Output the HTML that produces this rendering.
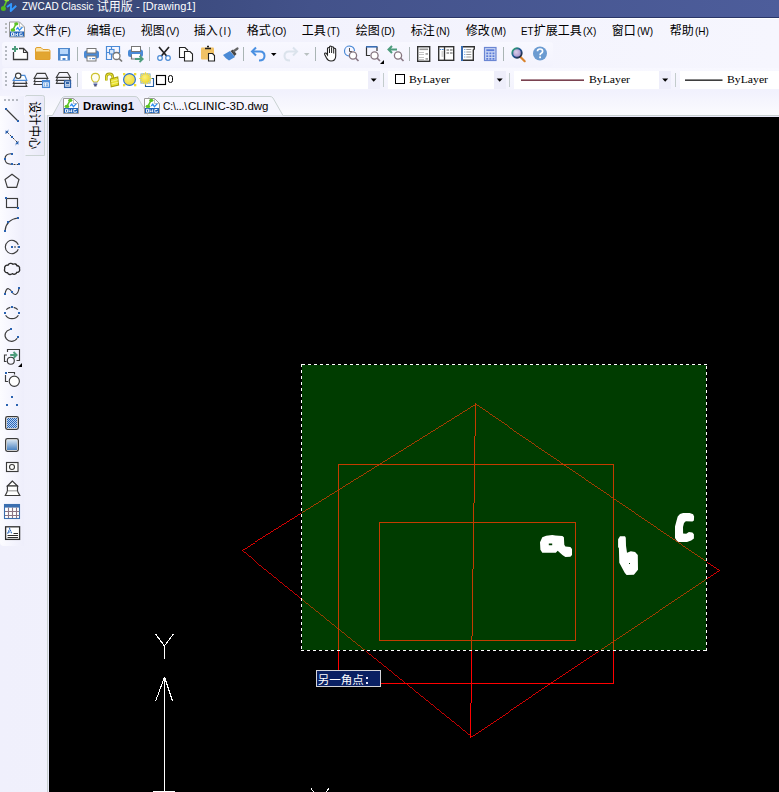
<!DOCTYPE html>
<html><head><meta charset="utf-8"><title>ZWCAD</title>
<style>
html,body{margin:0;padding:0}
body{width:779px;height:792px;overflow:hidden;position:relative;background:linear-gradient(90deg,#f0f0fc,#f6f6fe);font-family:"Liberation Sans",sans-serif}
.a{position:absolute}
.t{position:absolute;white-space:pre;transform-origin:0 0;display:block}
svg{position:absolute;left:0;top:0;overflow:visible}
svg text{font-family:"Liberation Sans","Noto Sans CJK SC",sans-serif}
</style></head><body>
<div class="a" style="left:0;top:0;width:779px;height:17px;background:linear-gradient(90deg,#374570 0,#3e4d82 28%,#43528a 40%,#4d5d9b 100%)"></div>
<div class="a" style="left:0;top:17px;width:779px;height:1px;background:#2a3668"></div>
<div class="a" style="left:0;top:18px;width:779px;height:1px;background:#fff"></div>
<span class="t" style="left:21.50px;top:0.04px;font:normal 11px/normal 'Liberation Sans',sans-serif;color:#fff;transform:scaleX(0.9072);">ZWCAD Classic</span>
<span class="t" style="left:135.50px;top:0.04px;font:normal 11px/normal 'Liberation Sans',sans-serif;color:#fff;transform:scaleX(1.0032);">- [Drawing1]</span>
<div class="a" style="left:0;top:90px;width:779px;height:25px;background:linear-gradient(#f1f1fd,#fbfbfe)"></div>
<div class="a" style="left:47px;top:115px;width:732px;height:1px;background:#c8d0d0"></div>
<div class="a" style="left:47px;top:116px;width:1px;height:676px;background:#c8d0d0"></div>
<div class="a" style="left:48px;top:116px;width:731px;height:676px;background:#e8e8f8"></div>
<div class="a" style="left:49px;top:117px;width:730px;height:675px;background:#000"></div>
<svg width="779" height="792" viewBox="0 0 779 792" shape-rendering="crispEdges">
<g shape-rendering="geometricPrecision"><text x="96.8" y="11.1" font-size="12" fill="#fff">试用版</text></g>
<g shape-rendering="geometricPrecision"><path d="M6.6 1L4.2 6.5" stroke="#5ec624" stroke-width="1.7" stroke-linecap="round" fill="none"/><ellipse cx="6.8" cy="0.2" rx="2.3" ry="1.4" fill="#8ee030"/><circle cx="3.4" cy="8.5" r="2.5" fill="#52b81c"/><path d="M7 7L11.2 3.9L10.7 11L16.2 5.8" fill="none" stroke="#3399ff" stroke-width="1.9" stroke-linejoin="round"/></g>
<g stroke="#f00" stroke-width="1" fill="none">
<path stroke-width="0.848" d="M475.5 404.5 L241.5 550.5"/>
<path stroke-width="0.778" d="M241.5 550.5 L471.5 736.5"/>
<path stroke-width="0.831" d="M471.5 736.5 L719.5 570.5"/>
<path stroke-width="0.827" d="M719.5 570.5 L475.5 404.5"/>
<path d="M475.51 403 L470.49 738"/>
<rect x="338.5" y="464.5" width="275" height="219"/>
<rect x="379.5" y="522.5" width="196" height="118"/>
</g>
<rect x="302" y="365" width="404" height="285" fill="rgba(0,255,0,0.235)"/>
<g stroke="#000" stroke-width="1" fill="none"><path d="M301 364.5H707M301.5 364V651M301 650.5H707M706.5 364V651"/></g>
<g stroke="#fff" stroke-width="1" fill="none" stroke-dasharray="3 3"><path d="M707 364.5H301"/><path d="M301.5 364V651"/><path d="M301 650.5H707"/><path d="M706.5 651V364"/></g>
<g fill="#fff" shape-rendering="auto">
<path fill-rule="evenodd" d="M542.3 537.3L546.2 535.8L552.3 535L555.4 535.4L562.4 535.9L563.9 537.3L564.3 544.7L565.4 546.6L570.4 547L572 548.9L572 555.1L570.4 556.8L565.4 557L562.4 555.1L557.7 550.8L555.8 552.7L542.3 552.7L540.4 549.7L540 542.3Z M548.8 543.6H552.2V545.3H548.8Z"/>
<path fill-rule="evenodd" d="M620 536.2L625 536.2L625.8 537.7L626 545.8L627 552.7L630.8 551.2L635.1 552L637.8 555L638 569.7L633.9 574.7L626.6 574.9L624.7 572.8L619.3 562.8L618.9 548.1L618.1 547.3L618.1 539.3Z M629 563H630V564H629Z"/>
<path d="M680 513.9L683.1 512.9L689.7 512.9L693.1 514.3L694.1 516.6L693.9 520.4L692.4 521.6L685.8 521.2L684 523.1L683 527L683.1 533.5L686.2 533.7L688.9 532L692.4 532.4L693.9 534.3L693.9 538.5L691.2 540.4L687 542L678.5 542L676.6 540.4L675 538.1L675 526.6L676.6 520.4L677.7 516.6Z"/>
</g>
<g stroke="#fff" stroke-width="1" fill="none">
<path d="M155.5 634 L164.5 646 L173.5 634 M164.5 646 V658.5"/>
<path d="M164.5 677 V792 M164.5 677 L155.5 701.5 M164.5 677 L172.5 701"/>
<path d="M153 791.5 H175"/>
<path d="M311 788.5 L314 792 M329 788.5 L326 792"/>
</g>
<rect x="316.500" y="670.500" width="64" height="16" fill="#0a2062" stroke="#d4d4d8"/>
<g shape-rendering="geometricPrecision"><text x="317.800" y="683.700" font-size="11.500" fill="#fff">另一角点</text></g>
<rect x="366" y="677" width="2" height="2" fill="#e8e8ff"/><rect x="366" y="682" width="2" height="2" fill="#e8e8ff"/>
</svg>
<span class="t" style="left:57.80px;top:25.05px;font:normal 11px/normal 'Liberation Sans',sans-serif;color:#000;transform:scaleX(0.9100);">(F)</span>
<span class="t" style="left:111.80px;top:25.05px;font:normal 11px/normal 'Liberation Sans',sans-serif;color:#000;transform:scaleX(0.9100);">(E)</span>
<span class="t" style="left:165.80px;top:25.05px;font:normal 11px/normal 'Liberation Sans',sans-serif;color:#000;transform:scaleX(0.9100);">(V)</span>
<span class="t" style="left:218.80px;top:25.05px;font:normal 11px/normal 'Liberation Sans',sans-serif;color:#000;transform:scaleX(0.9100);letter-spacing:1.4px;">(I)</span>
<span class="t" style="left:271.80px;top:25.05px;font:normal 11px/normal 'Liberation Sans',sans-serif;color:#000;transform:scaleX(0.9100);">(O)</span>
<span class="t" style="left:326.80px;top:25.05px;font:normal 11px/normal 'Liberation Sans',sans-serif;color:#000;transform:scaleX(0.9100);">(T)</span>
<span class="t" style="left:380.80px;top:25.05px;font:normal 11px/normal 'Liberation Sans',sans-serif;color:#000;transform:scaleX(0.9100);">(D)</span>
<span class="t" style="left:435.80px;top:25.05px;font:normal 11px/normal 'Liberation Sans',sans-serif;color:#000;transform:scaleX(0.9100);">(N)</span>
<span class="t" style="left:490.80px;top:25.05px;font:normal 11px/normal 'Liberation Sans',sans-serif;color:#000;transform:scaleX(0.9100);">(M)</span>
<span class="t" style="left:521.00px;top:25.05px;font:normal 11px/normal 'Liberation Sans',sans-serif;color:#000;transform:scaleX(0.8889);">ET</span>
<span class="t" style="left:582.80px;top:25.05px;font:normal 11px/normal 'Liberation Sans',sans-serif;color:#000;transform:scaleX(0.9100);">(X)</span>
<span class="t" style="left:636.80px;top:25.05px;font:normal 11px/normal 'Liberation Sans',sans-serif;color:#000;transform:scaleX(0.9100);">(W)</span>
<span class="t" style="left:694.80px;top:25.05px;font:normal 11px/normal 'Liberation Sans',sans-serif;color:#000;transform:scaleX(0.9100);">(H)</span>
<svg width="779" height="120" viewBox="0 0 779 120">
<rect x="5" y="23" width="2" height="2" fill="#b8bcbe"/>
<rect x="5" y="27" width="2" height="2" fill="#b8bcbe"/>
<rect x="5" y="31" width="2" height="2" fill="#b8bcbe"/>
<text x="32.800" y="35.200" font-size="12" fill="#000">文件</text>
<text x="86.800" y="35.200" font-size="12" fill="#000">编辑</text>
<text x="140.800" y="35.200" font-size="12" fill="#000">视图</text>
<text x="193.800" y="35.200" font-size="12" fill="#000">插入</text>
<text x="246.800" y="35.200" font-size="12" fill="#000">格式</text>
<text x="301.800" y="35.200" font-size="12" fill="#000">工具</text>
<text x="355.800" y="35.200" font-size="12" fill="#000">绘图</text>
<text x="410.800" y="35.200" font-size="12" fill="#000">标注</text>
<text x="465.800" y="35.200" font-size="12" fill="#000">修改</text>
<text x="533.800" y="35.200" font-size="12" fill="#000">扩展工具</text>
<text x="611.800" y="35.200" font-size="12" fill="#000">窗口</text>
<text x="669.800" y="35.200" font-size="12" fill="#000">帮助</text>
</svg>
<div class="a" style="left:2px;top:42px;width:551px;height:25px;background:linear-gradient(#f8f8ff,#f3f3fd);border-radius:3px"></div>
<div class="a" style="left:2px;top:68px;width:777px;height:22px;background:linear-gradient(#f8f8ff,#f3f3fd);border-radius:3px 0 0 3px"></div>
<svg width="779" height="120" viewBox="0 0 779 120">
<rect x="5" y="46" width="2" height="2" fill="#b4b8c0"/>
<rect x="5" y="50" width="2" height="2" fill="#b4b8c0"/>
<rect x="5" y="54" width="2" height="2" fill="#b4b8c0"/>
<rect x="5" y="58" width="2" height="2" fill="#b4b8c0"/>
<rect x="5" y="72" width="2" height="2" fill="#b4b8c0"/>
<rect x="5" y="76" width="2" height="2" fill="#b4b8c0"/>
<rect x="5" y="80" width="2" height="2" fill="#b4b8c0"/>
<rect x="5" y="84" width="2" height="2" fill="#b4b8c0"/>
<rect x="77" y="47" width="1" height="14" fill="#a9b4b4"/>
<rect x="149" y="47" width="1" height="14" fill="#a9b4b4"/>
<rect x="243" y="47" width="1" height="14" fill="#a9b4b4"/>
<rect x="315" y="47" width="1" height="14" fill="#a9b4b4"/>
<rect x="409" y="47" width="1" height="14" fill="#a9b4b4"/>
<rect x="503" y="47" width="1" height="14" fill="#a9b4b4"/>
<path d="M13.5 52V59.5H27.5V52.5L23.5 48.5H19" fill="#fff" stroke="#3a3a3a" stroke-width="1.3"/>
<path d="M23.5 48.5V52.5H27.5" fill="none" stroke="#3a3a3a" stroke-width="1.1"/>
<path d="M12 49H18M15 46V52" stroke="#4d9c7c" stroke-width="2" fill="none"/>
<path d="M35.5 59V49Q35.5 47.5 37 47.5H41L43 49.5H48.5Q50 49.5 50 51V59Q50 59.5 49.5 59.5H36Q35.5 59.5 35.5 59Z" fill="#fbe3a6" stroke="#e0a02e" stroke-width="1"/>
<path d="M36 59.5V52H49.5V59.5Z" fill="#e2a631" stroke="#e0a02e" stroke-width="1"/>
<rect x="58.5" y="48.5" width="11" height="11.5" fill="#4e88cc" stroke="#4e88cc" stroke-width="1"/>
<rect x="60" y="49" width="8" height="5" fill="#b6d7fb"/>
<path d="M60.5 60V56H67.5V60H65.5V58H62.5V60Z" fill="#fff"/>
<rect x="84" y="50.5" width="15" height="8" rx="2.5" fill="#4a8ad6"/><rect x="87" y="48.5" width="9" height="4.5" fill="#fff" stroke="#777" stroke-width="1"/><rect x="87" y="56" width="9" height="5" fill="#fff" stroke="#777" stroke-width="1"/>
<rect x="89.5" y="58" width="1.2" height="1.2" fill="#4a8ad6"/><rect x="92" y="58" width="3" height="1.2" fill="#4a8ad6"/>
<path d="M119.500 53V46.500H106.500V59.500H112M111.500 46.500V59.500M106.500 52.500H119.500" fill="none" stroke="#4a8ad6" stroke-width="1.200"/>
<rect x="109.500" y="49.500" width="4.500" height="4.500" fill="#dbe9fb" stroke="#4a8ad6" stroke-width="1.100"/>
<circle cx="116.500" cy="56" r="3.500" fill="#fff" stroke="#777" stroke-width="1.300"/><path d="M119 58.500L122 61.500" stroke="#777" stroke-width="1.700"/>
<rect x="128" y="49.5" width="15" height="7.5" rx="2.5" fill="#4a8ad6"/>
<rect x="131.500" y="46.500" width="9" height="5" fill="#fff" stroke="#777" stroke-width="1"/>
<path d="M131.5 54.5V59H137M140.5 54.5V56" fill="none" stroke="#777" stroke-width="1.2"/><rect x="132" y="54" width="8" height="3" fill="#fff"/>
<path d="M135 59H142M139.5 56L142.7 59L139.5 62" fill="none" stroke="#4d9c7c" stroke-width="1.8"/>
<path d="M159 47L167.5 57M169 47L160.500 57" stroke="#222" stroke-width="1.7" fill="none"/>
<circle cx="160" cy="58" r="2.3" fill="#fff" stroke="#4a8ad6" stroke-width="1.2"/><circle cx="168" cy="58" r="2.3" fill="#fff" stroke="#4a8ad6" stroke-width="1.2"/>
<path d="M184 57.500H179.500V47.500H185L188 50.500" fill="#fff" stroke="#222" stroke-width="1.1"/>
<path d="M184.500 51.500H190L192.500 54V61H184.500Z" fill="#fff" stroke="#222" stroke-width="1.1"/>
<rect x="201" y="47.500" width="13" height="12" rx="1" fill="#f1c265"/>
<path d="M205 48.500H211M207 46.500H209" stroke="#222" stroke-width="1.4" fill="none"/>
<path d="M208.500 53.500H212.500L214.500 55.500V61H208.500Z" fill="#fff" stroke="#222" stroke-width="1.1"/>
<path d="M223 55L230 51L235 57L229 60.500Q225 58 223 55Z" fill="#4a8ad6"/>
<path d="M230.500 51L233 49.500L236.500 54L234.500 56Z" fill="#444"/><path d="M234 51L237.500 48.500" stroke="#666" stroke-width="2.2" stroke-linecap="round"/>
<path d="M252 51.500H260Q264.500 51.500 264.500 56Q264.500 60.500 259 60.500" fill="none" stroke="#4a90e2" stroke-width="2"/><path d="M256 47.500L252 51.500L256 55.500" fill="none" stroke="#4a90e2" stroke-width="2"/>
<path d="M271 53H276.500L273.700 56Z" fill="#000"/>
<path d="M297 51.500H289Q284.500 51.500 284.500 56Q284.500 60.500 290 60.500" fill="none" stroke="#dbe3ec" stroke-width="2"/><path d="M293 47.500L297 51.500L293 55.500" fill="none" stroke="#dbe3ec" stroke-width="2"/>
<path d="M304 53H309.500L306.700 56Z" fill="#b9c1c1"/>
<path d="M327.500 55V48.500Q327.500 47.500 328.500 47.500Q329.500 47.500 329.500 48.500V47Q329.500 46 330.500 46Q331.600 46 331.600 47V47.500Q331.600 46.700 332.600 46.700Q333.700 46.700 333.700 47.700V49Q333.700 48.300 334.700 48.300Q335.700 48.300 335.700 49.300V56Q335.700 61 331 61Q328 61 326.500 58L324.700 54.500Q324.300 53.300 325.300 53Q326.200 52.800 326.800 54Z" fill="#fff" stroke="#222" stroke-width="1.1"/>
<path d="M329.500 48.500V53M331.600 47.500V53M333.700 49V53.500" stroke="#222" stroke-width="1" fill="none"/>
<path d="M349 56A5 5 0 1 1 354.500 51" fill="none" stroke="#4a8ad6" stroke-width="1.2"/><path d="M349.500 48V51.500H352" fill="none" stroke="#555" stroke-width="1"/>
<circle cx="353" cy="55.5" r="3.600" fill="#fff" stroke="#85757f" stroke-width="1.3"/><path d="M355.5 58.0L358.5 61.0" stroke="#8a7a86" stroke-width="1.7"/>
<path d="M366.500 47V55.500H370M377 47V51" fill="none" stroke="#333" stroke-width="1.2"/><rect x="366" y="46" width="11.500" height="1.600" fill="#3a6eb4"/>
<circle cx="374.5" cy="55.5" r="3.600" fill="#fff" stroke="#85757f" stroke-width="1.3"/><path d="M377.0 58.0L380.0 61.0" stroke="#8a7a86" stroke-width="1.7"/>
<path d="M384 60V64H380Z" fill="#000"/>
<path d="M388.500 49.500H397M392 46L388.500 49.500L392 53" fill="none" stroke="#4d9c7c" stroke-width="2"/>
<circle cx="398" cy="55.5" r="3.600" fill="#fff" stroke="#85757f" stroke-width="1.3"/><path d="M400.5 58.0L403.5 61.0" stroke="#8a7a86" stroke-width="1.7"/>
<rect x="417.700" y="46.700" width="12" height="14.600" fill="#fff" stroke="#333" stroke-width="1.400"/>
<rect x="419.500" y="48.500" width="8.500" height="1.600" fill="#999"/>
<path d="M419.500 52.5H424" stroke="#888" stroke-width="1" stroke-dasharray="1 1"/>
<path d="M419.500 54.5H424" stroke="#888" stroke-width="1" stroke-dasharray="1 1"/>
<path d="M419.500 57.5H424" stroke="#888" stroke-width="1" stroke-dasharray="1 1"/>
<path d="M419.500 59.5H424" stroke="#888" stroke-width="1" stroke-dasharray="1 1"/>
<rect x="425.500" y="53" width="2.500" height="1.800" fill="#aaa"/><rect x="425.500" y="58" width="2.500" height="1.800" fill="#aaa"/>
<rect x="438.700" y="46.700" width="15" height="13.600" fill="#fff" stroke="#333" stroke-width="1.400"/><path d="M444.500 47V60" stroke="#333" stroke-width="1.300"/>
<rect x="439.800" y="49" width="1.200" height="1" fill="#4a8ad6"/><rect x="441.800" y="49" width="1.800" height="1" fill="#4a8ad6"/>
<rect x="441.500" y="51.5" width="2" height="1" fill="#aaa"/>
<rect x="441.500" y="53.5" width="2" height="1" fill="#aaa"/>
<rect x="441.500" y="55.5" width="2" height="1" fill="#aaa"/>
<rect x="446.500" y="49" width="2.600" height="2" fill="#aaa"/>
<rect x="446.500" y="52" width="2.600" height="2" fill="#aaa"/>
<rect x="450" y="49" width="2.600" height="2" fill="#aaa"/>
<rect x="450" y="52" width="2.600" height="2" fill="#aaa"/>
<path d="M461.700 46.700H474.300V49L473.300 50V60.300H461.700Z" fill="#fff" stroke="#333" stroke-width="1.400"/><rect x="461" y="46" width="2" height="15" fill="#3a6eb4"/>
<rect x="464.300" y="49" width="1" height="1" fill="#4a8ad6"/><rect x="466.300" y="49" width="5" height="1" fill="#999"/>
<rect x="464.300" y="51.5" width="1" height="1" fill="#4a8ad6"/><rect x="466.300" y="51.5" width="5" height="1" fill="#999"/>
<rect x="464.300" y="54" width="1" height="1" fill="#4a8ad6"/><rect x="466.300" y="54" width="5" height="1" fill="#999"/>
<rect x="464.300" y="56.5" width="1" height="1" fill="#4a8ad6"/><rect x="466.300" y="56.5" width="5" height="1" fill="#999"/>
<rect x="484.500" y="47.500" width="11.500" height="13" fill="#c9d5f3" stroke="#6b86d3" stroke-width="1.200"/>
<rect x="486.300" y="49.300" width="8" height="1.800" fill="#5b7bd8"/>
<rect x="486.300" y="52.5" width="1.900" height="1.700" fill="#5b7bd8"/>
<rect x="486.300" y="55.3" width="1.900" height="1.700" fill="#5b7bd8"/>
<rect x="486.300" y="58" width="1.900" height="1.700" fill="#5b7bd8"/>
<rect x="489.400" y="52.5" width="1.900" height="1.700" fill="#5b7bd8"/>
<rect x="489.400" y="55.3" width="1.900" height="1.700" fill="#5b7bd8"/>
<rect x="489.400" y="58" width="1.900" height="1.700" fill="#5b7bd8"/>
<rect x="492.500" y="52.5" width="1.900" height="1.700" fill="#5b7bd8"/>
<rect x="492.500" y="55.3" width="1.900" height="1.700" fill="#5b7bd8"/>
<rect x="492.500" y="58" width="1.900" height="1.700" fill="#5b7bd8"/>
<defs><radialGradient id="lens" cx="0.4" cy="0.4" r="0.7"><stop offset="0" stop-color="#d9cdea"/><stop offset="1" stop-color="#9a86c4"/></radialGradient><linearGradient id="ring" x1="0" y1="0" x2="1" y2="1"><stop offset="0" stop-color="#35b06a"/><stop offset="0.5" stop-color="#1f4f9a"/><stop offset="1" stop-color="#222"/></linearGradient></defs>
<path d="M520.500 57L524.700 61.200" stroke="#d9822b" stroke-width="2.200" stroke-linecap="round"/>
<circle cx="517" cy="53" r="4.700" fill="url(#lens)" stroke="url(#ring)" stroke-width="1.900"/>
<circle cx="540" cy="53.500" r="7" fill="#6b9bd1"/>
<path d="M537.500 51.300Q537.500 49 540 49Q542.600 49 542.600 51.200Q542.600 52.600 541.200 53.300Q540.100 53.900 540.100 55.300" fill="none" stroke="#fff" stroke-width="1.700"/><rect x="539.200" y="56.400" width="1.800" height="1.800" fill="#fff"/>
</svg>
<div class="a" style="left:82px;top:71px;width:298px;height:18px;background:#fff"></div>
<div class="a" style="left:368px;top:71px;width:12px;height:18px;background:#eeeefa"></div>
<div class="a" style="left:388px;top:71px;width:118px;height:18px;background:#fff"></div>
<div class="a" style="left:494px;top:71px;width:12px;height:18px;background:#eeeefa"></div>
<div class="a" style="left:514px;top:71px;width:157px;height:18px;background:#fff"></div>
<div class="a" style="left:659px;top:71px;width:12px;height:18px;background:#eeeefa"></div>
<div class="a" style="left:680px;top:71px;width:99px;height:18px;background:#fff"></div>
<svg width="779" height="120" viewBox="0 0 779 120">
<rect x="77" y="73" width="1" height="14" fill="#a9b4b4"/>
<rect x="383" y="73" width="1" height="14" fill="#c3cccc"/>
<rect x="509" y="73" width="1" height="14" fill="#c3cccc"/>
<rect x="675" y="73" width="1" height="14" fill="#c3cccc"/>
<path d="M370.7 78.500H376.7L373.7 81.700Z" fill="#000"/>
<path d="M496.7 78.500H502.7L499.7 81.700Z" fill="#000"/>
<path d="M662.2 78.500H668.2L665.2 81.700Z" fill="#000"/>
<path d="M13.300 80.300L16.200 75.400H24.800L26.800 80.300Z" fill="#fff" stroke="#4a8ad6" stroke-width="1.200"/>
<circle cx="18.200" cy="75.800" r="2.700" fill="#fff" stroke="#3c3c3c" stroke-width="1.100"/>
<path d="M14.3 81.2L13.3 83.4H26.8L25.8 81.2M14.3 84.2L13.3 86.4H26.8L25.8 84.2" fill="none" stroke="#3c3c3c" stroke-width="1.150"/>
<path d="M34.200 78.300L37.100 73.300H45.300L47.800 78.300ZM35.2 79.3L34.2 81.5H47.8L46.8 79.3M35.2 82.3L34.2 84.5H47.8L46.8 82.3" fill="none" stroke="#3c3c3c" stroke-width="1.150"/>
<rect x="42.600" y="80.800" width="6.800" height="6.600" fill="#fff" stroke="#4a8ad6" stroke-width="1.300"/><rect x="42" y="80.200" width="8" height="2.200" fill="#4a8ad6"/>
<rect x="44" y="83.500" width="1.200" height="1" fill="#4a8ad6"/><rect x="46" y="83.500" width="2" height="1" fill="#4a8ad6"/><rect x="44" y="85.300" width="1.200" height="1" fill="#4a8ad6"/><rect x="46" y="85.300" width="2" height="1" fill="#4a8ad6"/>
<path d="M56.400 77.300L59.300 72.500H67.500L70.400 77.300ZM57.4 78.1L56.4 80.3H70.4L69.4 78.1M57.4 81.1L56.4 83.3H70.4L69.4 81.1" fill="none" stroke="#3c3c3c" stroke-width="1.150"/>
<rect x="64.600" y="80.800" width="5.900" height="6.600" fill="#e6eefa" stroke="#2f62a8" stroke-width="1.300"/><rect x="66" y="82" width="3.200" height="2.200" fill="#2f62a8"/><rect x="66" y="85.200" width="3.200" height="1" fill="#7f9cc4"/>
<path d="M93.700 82Q91.400 79.800 91.400 77.400Q91.400 73.400 95.400 73.400Q99.400 73.400 99.400 77.400Q99.400 79.800 97.100 82Z" fill="#fffef0" stroke="#cdc22e" stroke-width="1.200"/>
<rect x="93.400" y="82.300" width="4" height="1.400" fill="#9aa4c4"/><rect x="93.600" y="83.800" width="3.600" height="1.300" fill="#4c5ca0"/><rect x="94.200" y="85.200" width="2.400" height="1.200" fill="#2a2f55"/>
<path d="M106.300 80.500V77Q106.300 73.900 109.500 73.900Q112.700 73.900 112.700 77V78.500" fill="none" stroke="#a8a010" stroke-width="2.600"/>
<path d="M106.300 80.500V77Q106.300 73.900 109.500 73.900Q112.700 73.900 112.700 77V78.500" fill="none" stroke="#ece83a" stroke-width="1"/>
<path d="M110.300 79L117.700 77L118.600 85L111.200 86.900Z" fill="#e9e22c" stroke="#a8a010" stroke-width="1.100"/><path d="M111 81.500L118 79.700M111.300 84L118.300 82.200" stroke="#f8f4a0" stroke-width="0.800"/>
<rect x="123" y="73" width="2.300" height="2.300" fill="#eedc30"/>
<rect x="134" y="73" width="2.300" height="2.300" fill="#eedc30"/>
<rect x="123" y="84" width="2.300" height="2.300" fill="#eedc30"/>
<rect x="134" y="84" width="2.300" height="2.300" fill="#eedc30"/>
<defs><radialGradient id="sun" cx="0.4" cy="0.35" r="0.8"><stop offset="0" stop-color="#fbf080"/><stop offset="1" stop-color="#ecd62a"/></radialGradient></defs>
<circle cx="129.500" cy="79.500" r="5.900" fill="url(#sun)" stroke="#2b72d8" stroke-width="1.200"/>
<path d="M151 78.500H153.500V86.500H145.500V84" fill="none" stroke="#1f5aa0" stroke-width="1.100"/>
<rect x="140" y="73" width="11" height="11" rx="1.500" fill="#a8c8ee"/>
<path d="M145.500 78.500L151.80 78.50M145.500 78.500L150.67 80.64M145.500 78.500L149.95 82.95M145.500 78.500L147.64 83.67M145.500 78.500L145.50 84.80M145.500 78.500L143.36 83.67M145.500 78.500L141.05 82.95M145.500 78.500L140.33 80.64M145.500 78.500L139.20 78.50M145.500 78.500L140.33 76.36M145.500 78.500L141.05 74.05M145.500 78.500L143.36 73.33M145.500 78.500L145.50 72.20M145.500 78.500L147.64 73.33M145.500 78.500L149.95 74.05M145.500 78.500L150.67 76.36" stroke="#f2dc3a" stroke-width="1.200" fill="none"/>
<circle cx="145.500" cy="78.500" r="3.900" fill="url(#sun)"/>
<rect x="156.500" y="75.500" width="9" height="9" fill="#fff" stroke="#000" stroke-width="1.150"/><rect x="168.500" y="75.500" width="4" height="7" rx="1.900" fill="none" stroke="#000" stroke-width="1"/>
<rect x="395.500" y="74.500" width="9" height="9" fill="#fff" stroke="#000" stroke-width="1" shape-rendering="crispEdges"/>
<rect x="521" y="79.500" width="63" height="1.300" fill="#5a1426"/>
<rect x="685" y="79.500" width="37.500" height="1.300" fill="#111"/>
</svg>
<span class="t" style="left:409.00px;top:73.20px;font:normal 11px/normal 'Liberation Serif',sans-serif;color:#000;transform:scaleX(1.0658);">ByLayer</span>
<span class="t" style="left:589.00px;top:73.20px;font:normal 11px/normal 'Liberation Serif',sans-serif;color:#000;transform:scaleX(1.0658);">ByLayer</span>
<span class="t" style="left:726.50px;top:73.20px;font:normal 11px/normal 'Liberation Serif',sans-serif;color:#000;transform:scaleX(1.0658);">ByLayer</span>
<svg width="779" height="792" viewBox="0 0 779 792">
<defs><linearGradient id="ltb" x1="0" y1="0" x2="1" y2="0"><stop offset="0" stop-color="#fcfcff"/><stop offset="0.5" stop-color="#f5f5fe"/><stop offset="1" stop-color="#eeeefb"/></linearGradient></defs>
<path d="M0 96H24V546H4Q0 546 0 542Z" fill="url(#ltb)"/>
<rect x="4" y="99" width="2" height="2" fill="#b4b8c0"/>
<rect x="8" y="99" width="2" height="2" fill="#b4b8c0"/>
<rect x="12" y="99" width="2" height="2" fill="#b4b8c0"/>
<rect x="16" y="99" width="2" height="2" fill="#b4b8c0"/>
<defs><linearGradient id="vtab" x1="0" y1="0" x2="1" y2="0"><stop offset="0" stop-color="#f3f3fd"/><stop offset="1" stop-color="#e9e9f7"/></linearGradient></defs>
<path d="M25 156V97Q25 95 27 95H42.500Q45 95 45 97.500V156Z" fill="url(#vtab)"/><path d="M25.500 96.500Q25.500 95.500 27 95.500H42.500Q44.500 95.500 44.500 97.500V155.500H25.500" fill="none" stroke="#ccd4d5" stroke-width="1"/>
<text transform="translate(30.1,101.2) rotate(90)" font-size="12" fill="#000">设计中心</text>
<path d="M140 115.500L148 98Q149 96.500 151 96.500H270Q272 96.500 273 98L283 115.500" fill="#f6f6fe" stroke="#c9d2d2" stroke-width="1"/>
<path d="M52.500 115.500L62 98Q63 96.500 65 96.500H135Q137 96.500 138 98L148 116.500H52Z" fill="#e9e9f8" stroke="none"/>
<path d="M52.500 115.500L62 98Q63 96.500 65 96.500H135Q137 96.500 138 98L148 115.500" fill="none" stroke="#c9d2d2" stroke-width="1"/>
<path d="M63.5 98.5H73.5L78.5 103.5V113.5H63.5Z" fill="#fff" stroke="#9a9a9a" stroke-width="1"/><path d="M73.5 98.5V103.5H78.5" fill="none" stroke="#b0b0b0" stroke-width="0.800"/><rect x="64" y="108" width="14" height="5" fill="#1f62b8"/><path d="M65.5 109.3V112.2H67.5V109.3Z M69 109.3V112.2L70.3 110.8L71.6 112.2V109.3 M76.3 109.5H73.8V112.2H76.3V111" fill="none" stroke="#fff" stroke-width="0.900"/><path d="M69.9 100.6L67.3 105.6" stroke="#5cc224" stroke-width="1.500" stroke-linecap="round"/><ellipse cx="70.3" cy="100.3" rx="2.100" ry="1.600" fill="#5cc224"/><ellipse cx="66.9" cy="106.4" rx="2.400" ry="1.600" fill="#5cc224"/><path d="M70.3 106.0L71.8 104.2L73.4 106.8L76.4 103.6" fill="none" stroke="#2f8cf0" stroke-width="1.300"/>
<path d="M144.5 98.5H154.5L159.5 103.5V113.5H144.5Z" fill="#fff" stroke="#9a9a9a" stroke-width="1"/><path d="M154.5 98.5V103.5H159.5" fill="none" stroke="#b0b0b0" stroke-width="0.800"/><rect x="145" y="108" width="14" height="5" fill="#1f62b8"/><path d="M146.5 109.3V112.2H148.5V109.3Z M150 109.3V112.2L151.3 110.8L152.6 112.2V109.3 M157.3 109.5H154.8V112.2H157.3V111" fill="none" stroke="#fff" stroke-width="0.900"/><path d="M150.9 100.6L148.3 105.6" stroke="#5cc224" stroke-width="1.500" stroke-linecap="round"/><ellipse cx="151.3" cy="100.3" rx="2.100" ry="1.600" fill="#5cc224"/><ellipse cx="147.9" cy="106.4" rx="2.400" ry="1.600" fill="#5cc224"/><path d="M151.3 106.0L152.8 104.2L154.4 106.8L157.4 103.600" fill="none" stroke="#2f8cf0" stroke-width="1.300"/>
<path d="M9.5 22.0H19.5L24.5 27.0V37.0H9.5Z" fill="#fff" stroke="#9a9a9a" stroke-width="1"/><path d="M19.5 22.0V27.0H24.5" fill="none" stroke="#b0b0b0" stroke-width="0.800"/><rect x="10" y="31.5" width="14" height="5" fill="#1f62b8"/><path d="M11.5 32.8V35.7H13.5V32.8Z M15 32.8V35.7L16.3 34.3L17.6 35.7V32.8 M22.3 33.0H19.8V35.7H22.3V34.5" fill="none" stroke="#fff" stroke-width="0.900"/><path d="M15.9 24.1L13.3 29.1" stroke="#5cc224" stroke-width="1.500" stroke-linecap="round"/><ellipse cx="16.3" cy="23.8" rx="2.100" ry="1.600" fill="#5cc224"/><ellipse cx="12.9" cy="29.9" rx="2.400" ry="1.600" fill="#5cc224"/><path d="M16.3 29.5L17.8 27.7L19.4 30.3L22.4 27.1" fill="none" stroke="#2f8cf0" stroke-width="1.300"/>
<path d="M6.500 109.500L17.500 120.500" fill="none" stroke="#3c3c3c" stroke-width="1.150"/><rect x="5" y="108" width="2" height="2" fill="#2a62b0"/><rect x="17" y="120" width="2" height="2" fill="#2a62b0"/>
<path d="M7 132L17 142" fill="none" stroke="#404040" stroke-width="1" stroke-dasharray="2.500 1.500"/>
<path d="M5.300 130.500L8.600 131.600L6.400 133.800ZM18.700 144.500L15.400 143.400L17.600 141.200Z" fill="#2a62b0"/><rect x="11" y="136" width="2" height="2" fill="#2a62b0"/>
<path d="M5 133.500L8.500 130.200M15.500 144.800L19 141.500" stroke="#2a62b0" stroke-width="0.900"/>
<path d="M11 153.800Q5 154 5 159Q5 164 11 164.200" fill="none" stroke="#3a3a3a" stroke-width="1.150"/><path d="M13.500 164.500H18" fill="none" stroke="#3a3a3a" stroke-width="1.100" stroke-dasharray="2 1.200"/><rect x="11" y="153" width="2" height="2" fill="#2a62b0"/><rect x="4" y="158" width="2" height="2" fill="#2a62b0"/><rect x="11" y="163" width="2" height="2" fill="#2a62b0"/><rect x="18" y="163" width="2" height="2" fill="#2a62b0"/>
<path d="M12 174.300L19 179.500L16.600 187.400H7.400L5 179.500Z" fill="none" stroke="#3c3c3c" stroke-width="1.150"/>
<rect x="6.500" y="198.500" width="11" height="9" fill="none" stroke="#3c3c3c" stroke-width="1.150"/><rect x="5" y="197" width="2" height="2" fill="#2a62b0"/><rect x="17" y="207" width="2" height="2" fill="#2a62b0"/>
<path d="M5 231Q6 219.500 18 218" fill="none" stroke="#3c3c3c" stroke-width="1.150"/><rect x="4" y="230" width="2" height="2" fill="#2a62b0"/><rect x="7" y="221" width="2" height="2" fill="#2a62b0"/><rect x="17" y="217" width="2" height="2" fill="#2a62b0"/>
<path d="M18.300 249.300A6.700 6.700 0 1 1 18.300 244.700" fill="none" stroke="#3c3c3c" stroke-width="1.150"/><path d="M14 247H17.500" stroke="#3a3a3a" stroke-width="1" stroke-dasharray="2 1"/><rect x="11" y="246" width="2" height="2" fill="#2a62b0"/><rect x="18" y="246" width="2" height="2" fill="#2a62b0"/>
<path d="M4.700 268.700A2.700 2.700 0 0 1 8 265.300A3 3 0 0 1 13 264.300A2.600 2.600 0 0 1 17 265.800A2.300 2.300 0 0 1 19.500 268.800A2.500 2.500 0 0 1 16.800 272.300A2.800 2.800 0 0 1 12.300 273.600A2.800 2.800 0 0 1 7.600 272.700A2.800 2.800 0 0 1 4.700 268.700Z" fill="none" stroke="#2a2a2a" stroke-width="1.350" stroke-linejoin="round"/>
<path d="M5 294Q6 288.300 8.500 288.700Q10.500 289.300 12 292Q13.800 295.200 16 294.300Q18.500 293 19 288" fill="none" stroke="#3c3c3c" stroke-width="1.150"/><rect x="4" y="293" width="2" height="2" fill="#2a62b0"/><rect x="11" y="291" width="2" height="2" fill="#2a62b0"/><rect x="18" y="287" width="2" height="2" fill="#2a62b0"/>
<path d="M6.300 309.700A7 5.700 0 0 1 10.300 307.400M13.700 307.400A7 5.700 0 0 1 17.700 309.700M18.400 315.300A7 5.700 0 0 1 5.600 315.300" fill="none" stroke="#3c3c3c" stroke-width="1.150"/><rect x="11" y="306" width="2" height="2" fill="#2a62b0"/><rect x="4" y="312" width="2" height="2" fill="#2a62b0"/><rect x="18" y="312" width="2" height="2" fill="#2a62b0"/>
<path d="M10 329.500A6.500 6 0 1 0 17.200 338.300" fill="none" stroke="#3c3c3c" stroke-width="1.150"/><rect x="10" y="328" width="2" height="2" fill="#2a62b0"/><rect x="17" y="336" width="2" height="2" fill="#2a62b0"/>
<path d="M7.500 352V349.500H19.500V360.500H16.500M7 355H4.500V361.500H6.500" fill="none" stroke="#3c3c3c" stroke-width="1.150"/>
<circle cx="10.800" cy="360.700" r="3.500" fill="none" stroke="#3a3a3a" stroke-width="1.150"/>
<path d="M10.200 355H16M13.500 352L16.600 355L13.500 358" fill="none" stroke="#4d9c7c" stroke-width="1.900"/>
<path d="M22 363V367H18Z" fill="#000"/>
<path d="M8 372.500H14.500V374.500M5.500 375V381.500H8" fill="none" stroke="#3c3c3c" stroke-width="1.150"/><rect x="5" y="372" width="2" height="2" fill="#2a62b0"/>
<circle cx="14.300" cy="381.300" r="5.100" fill="#fff" stroke="#3a3a3a" stroke-width="1.150"/>
<rect x="11" y="396" width="2" height="2" fill="#2a62b0"/><rect x="6" y="404" width="2" height="2" fill="#2a62b0"/><rect x="16" y="404" width="2" height="2" fill="#2a62b0"/>
<defs><pattern id="chk" width="2" height="2" patternUnits="userSpaceOnUse"><rect width="2" height="2" fill="#b9d2f2"/><rect width="1" height="1" fill="#2a66b8"/><rect x="1" y="1" width="1" height="1" fill="#2a66b8"/></pattern><linearGradient id="grd" x1="0" y1="0" x2="0" y2="1"><stop offset="0" stop-color="#d2e1f0"/><stop offset="1" stop-color="#4a82c2"/></linearGradient></defs>
<rect x="5.650" y="416.650" width="12.700" height="12.700" rx="1.800" fill="#fff" stroke="#3a3a3a" stroke-width="1.300"/><rect x="7" y="418" width="10" height="10" fill="url(#chk)"/>
<rect x="5.650" y="438.650" width="12.700" height="12.700" rx="1.800" fill="#fff" stroke="#3a3a3a" stroke-width="1.300"/><rect x="7" y="440" width="10" height="10" fill="url(#grd)"/>
<rect x="6.500" y="462.500" width="11.500" height="9" fill="#fff" stroke="#3a3a3a" stroke-width="1.150"/><circle cx="12" cy="467" r="2.500" fill="#fff" stroke="#3a3a3a" stroke-width="1.100"/>
<path d="M12.400 481L7.400 486H17.500Z" fill="#fff" stroke="#3a3a3a" stroke-width="1.150"/><rect x="7.400" y="486" width="10.100" height="5.200" fill="#fff" stroke="#3a3a3a" stroke-width="1.150"/><path d="M7.400 491.200L5.300 495.500H19.800L17.500 491.200" fill="#fff" stroke="#3a3a3a" stroke-width="1.150"/>
<rect x="4.500" y="504.500" width="15" height="14" fill="#fff" stroke="#3a6eb0" stroke-width="1.100"/><rect x="4" y="504" width="16" height="3.600" fill="#3a6eb0"/>
<path d="M8.500 507.600V518M12.500 507.600V518M16.500 507.600V518M5 511.500H19.500M5 515.500H19.500" stroke="#8a7484" stroke-width="1.100"/>
<rect x="5.600" y="526.800" width="14" height="12.600" fill="#fff" stroke="#2e2e2e" stroke-width="1.300"/>
<path d="M7.600 533.800L9.700 528.500L11.800 533.800M8.300 532H11.200" fill="none" stroke="#2f6cc0" stroke-width="1.100" stroke-dasharray="1.6 0.7"/>
<path d="M13.500 533.500H18M7.500 535.500H18M7.500 537.500H18" stroke="#2e2e2e" stroke-width="1"/>
</svg>
<span class="t" style="left:83.00px;top:100.05px;font:bold 11px/normal 'Liberation Sans',sans-serif;color:#000;transform:scaleX(1.0297);">Drawing1</span>
<span class="t" style="left:163.00px;top:100.05px;font:normal 11px/normal 'Liberation Sans',sans-serif;color:#000;transform:scaleX(0.9197);">C:\...\</span>
<span class="t" style="left:187.80px;top:100.05px;font:normal 11px/normal 'Liberation Sans',sans-serif;color:#000;transform:scaleX(1.0450);">CLINIC-3D.dwg</span>
</body></html>
